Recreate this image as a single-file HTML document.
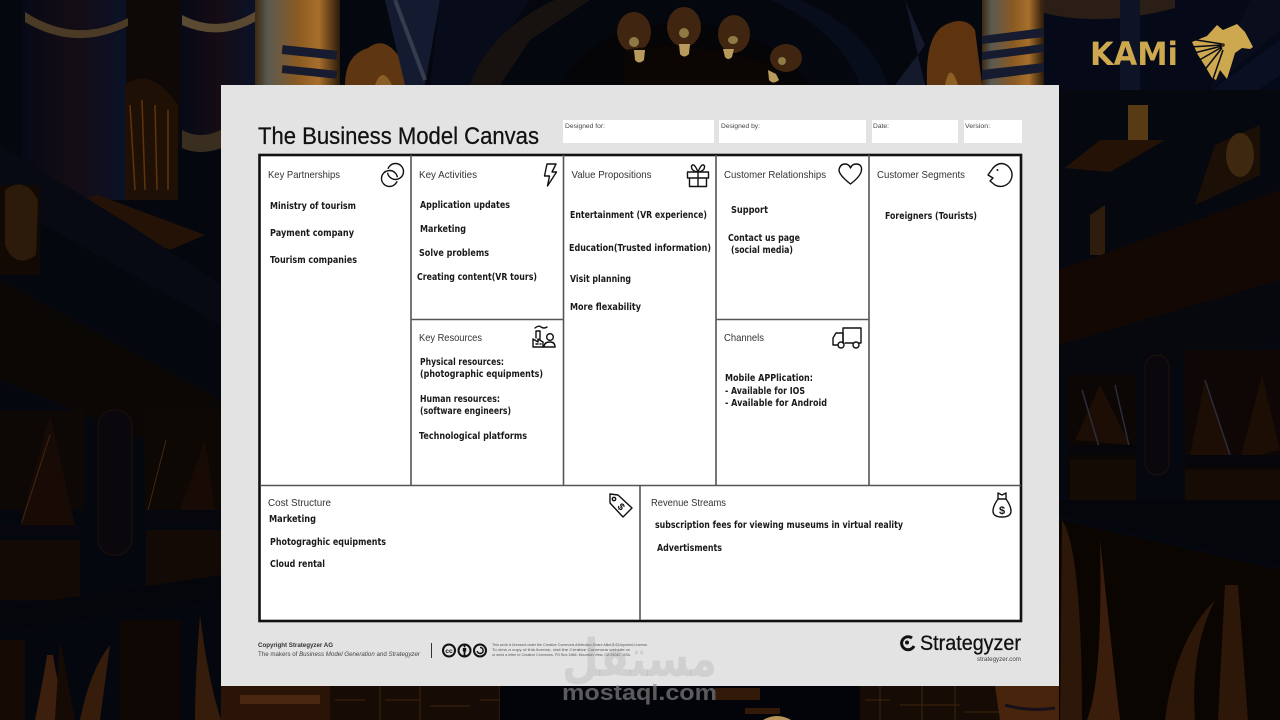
<!DOCTYPE html>
<html lang="en"><head><meta charset="utf-8"><title>The Business Model Canvas</title>
<style>html,body{margin:0;padding:0;background:#04060d;width:1280px;height:720px;overflow:hidden}svg{display:block}
.l{font:10.5px "Liberation Sans",sans-serif;fill:#333}
.b{font:bold 9.5px "DejaVu Sans",sans-serif;fill:#1a1a1a}
.i{fill:none;stroke:#111;stroke-width:1.4;stroke-linejoin:round;stroke-linecap:round}
.g{stroke:#555;stroke-width:1.6;fill:none}
</style></head><body>
<svg width="1280" height="720" viewBox="0 0 1280 720" xmlns="http://www.w3.org/2000/svg">
<defs>
<linearGradient id="gc" x1="0" x2="1" y1="0" y2="0"><stop offset="0" stop-color="#3d2a12"/><stop offset=".15" stop-color="#5a5a52"/><stop offset=".5" stop-color="#8a5a22"/><stop offset=".75" stop-color="#a86f2c"/><stop offset="1" stop-color="#2a1a0a"/></linearGradient>
<linearGradient id="nv" x1="0" x2="1" y1="0" y2="0"><stop offset="0" stop-color="#060a16"/><stop offset=".5" stop-color="#150c14"/><stop offset="1" stop-color="#0a1228"/></linearGradient>
</defs>
<rect width="1280" height="720" fill="#05070f"/>

<!-- left background -->
<g>
<rect x="22" y="0" width="104" height="200" fill="url(#nv)"/>
<rect x="180" y="0" width="75" height="150" fill="url(#nv)"/>
<path d="M126 0H180V150L126 120Z" fill="#0e0807"/>
<path d="M25 12Q75 45 128 18V26Q75 52 25 22Z" fill="#4a3a26"/>
<path d="M182 15Q220 35 258 10V20Q220 42 182 25Z" fill="#5a4a32"/>
<path d="M182 130Q200 140 221 130V148Q200 156 182 148Z" fill="#3a2e20"/>
<path d="M125 85Q150 65 178 105V200H125Z" fill="#1f1006"/>
<path d="M130 105L135 190M142 100L145 190M155 105L157 190M168 110L168 190" stroke="#5e340e" stroke-width="1.5"/>
<path d="M98 195L205 235L170 250L60 205Z" fill="#241206"/>
<path d="M0 145L130 225L221 285V325L0 200Z" fill="#080a13"/>
<rect x="0" y="185" width="40" height="90" fill="#120904"/>
<path d="M5 190Q25 175 38 200L36 255Q15 270 5 245Z" fill="#2c1a0b"/>
<path d="M0 280L221 400V470L0 380Z" fill="#0b0705"/>
<rect x="0" y="410" width="85" height="100" fill="#0d0705"/>
<rect x="145" y="410" width="76" height="100" fill="#0e0805"/>
<path d="M20 525L50 415L75 525ZM180 510L205 440L215 510Z" fill="#180b05"/>
<path d="M22 522L50 435M148 510L166 440" stroke="#3e2816" stroke-width="1"/>
<rect x="0" y="525" width="80" height="10" fill="#07070d"/>
<rect x="146" y="512" width="75" height="10" fill="#07070d"/>
<rect x="0" y="540" width="80" height="60" fill="#130a05"/>
<rect x="146" y="530" width="75" height="60" fill="#130a05"/>
<rect x="98" y="410" width="34" height="145" rx="16" fill="#0a080c" stroke="#20110a"/>
<path d="M0 608L221 575V600L0 632Z" fill="#05060c"/>
<path d="M120 620H180V720H120Z" fill="#0f0703"/>
<path d="M35 720Q45 670 47 655H53Q58 690 70 720Z" fill="#3c1f0c"/>
<path d="M80 720Q90 670 110 645L100 720ZM195 720Q195 680 200 615Q208 680 221 720Z" fill="#361c0a"/>
<path d="M0 640H25V720H0ZM60 640L75 720H55Z" fill="#150a04"/>
</g>

<!-- top center -->
<rect x="255" y="0" width="85" height="85" fill="url(#gc)"/>
<rect x="282" y="48" width="55" height="9" fill="#161b30" transform="rotate(6 310 53)"/>
<rect x="282" y="68" width="55" height="8" fill="#161b30" transform="rotate(6 310 72)"/>
<path d="M345 85Q345 55 368 48Q385 35 400 58L405 85Z" fill="#5e3612"/>
<path d="M375 85Q382 65 392 85Z" fill="#8a5e24"/>
<path d="M385 0H440L425 85H405Z" fill="#141b30"/>
<path d="M395 0L425 80" stroke="#343c4e" stroke-width="4"/>
<path d="M440 0L430 85H470L530 0Z" fill="#080c1a"/>
<path d="M470 85Q490 30 555 0H590L530 40L500 85Z" fill="#17120f"/>
<!-- dome -->
<path d="M560 85Q590 35 640 28Q720 10 790 60L810 85Z" fill="#050407"/>
<g fill="#402511"><ellipse cx="634" cy="32" rx="17" ry="20"/><ellipse cx="684" cy="27" rx="17" ry="20"/><ellipse cx="734" cy="34" rx="16" ry="19"/><ellipse cx="786" cy="58" rx="16" ry="14"/></g>
<g fill="#8e7a44"><ellipse cx="634" cy="42" rx="5" ry="5"/><ellipse cx="684" cy="33" rx="5" ry="5"/><ellipse cx="733" cy="40" rx="5" ry="4"/><ellipse cx="782" cy="61" rx="4" ry="4"/></g>
<path d="M625 50Q690 38 770 65L785 85H625Z" fill="#0c0603" opacity=".8"/>
<g fill="#b89a5c"><path d="M634 50h11l-1 10q-5 5-9 0z"/><path d="M679 44h11l-1 10q-5 5-9 0z"/><path d="M723 49h11l-2 8q-4 4-7 0z"/><path d="M768 70l8 4l3 6q-6 5-10 0z"/></g>
<path d="M800 0Q870 30 888 85H860Q840 30 770 0Z" fill="#080d1c"/>
<!-- top right -->
<path d="M905 0L925 85H895L925 45L905 0Z" fill="#141a2c"/>
<path d="M927 85Q925 35 945 25Q965 15 975 30L982 85Z" fill="#5e3410"/>
<path d="M945 85Q950 60 958 85Z" fill="#8e6024"/>
<rect x="982" y="0" width="62" height="85" fill="url(#gc)"/>
<path d="M982 36L1044 28V37L982 44ZM982 52L1044 44V52L982 60ZM982 70L1044 63V72L982 80Z" fill="#161b30"/>
<rect x="1044" y="0" width="236" height="130" fill="#060a18"/>
<path d="M1040 12Q1100 28 1175 8V0H1040Z" fill="#3a2616" opacity=".7"/>
<path d="M1145 140L1280 40V75L1170 150Z" fill="#0b0f22"/>
<path d="M1250 0L1280 0V30L1210 90Z" fill="#090d1c"/>
<path d="M1120 0H1140V100H1120Z" fill="#0f1326"/>

<!-- right background -->
<rect x="1059" y="90" width="221" height="430" fill="#06080f"/>
<path d="M1128 105h20v35h-20z" fill="#583a14"/>
<path d="M1065 168L1100 140H1165L1110 172Z" fill="#241206"/>
<path d="M1215 145L1260 125V175L1195 205Z" fill="#1c1006"/>
<ellipse cx="1240" cy="155" rx="14" ry="22" fill="#3e2810"/>
<path d="M1090 215L1105 205V255H1090Z" fill="#2e1c0c"/>
<path d="M1059 270L1280 190V280L1059 345Z" fill="#130804"/>
<path d="M1059 345L1280 280V340L1059 395Z" fill="#07080e"/>
<rect x="1068" y="375" width="68" height="125" fill="#0c0705"/>
<rect x="1185" y="350" width="95" height="150" fill="#0e0705"/>
<path d="M1075 440L1100 385L1130 445ZM1190 455L1205 380L1230 455ZM1240 460L1262 375L1280 450Z" fill="#1c0d05"/>
<path d="M1082 390L1100 450M1115 385L1130 450M1205 380L1230 455" stroke="#2c2d3a" stroke-width="1.5"/>
<rect x="1068" y="445" width="68" height="10" fill="#06060a"/>
<rect x="1185" y="455" width="95" height="12" fill="#06060a"/>
<rect x="1070" y="460" width="66" height="42" fill="#150b05"/>
<rect x="1185" y="470" width="95" height="50" fill="#170b05"/>
<rect x="1145" y="355" width="24" height="120" rx="12" fill="#0a080c" stroke="#20110a"/>
<path d="M1059 500H1280V565L1059 515Z" fill="#05060c"/>
<path d="M1059 520L1280 570V720H1059Z" fill="#0b0502"/>
<path d="M1087 720Q1103 680 1100 540Q1115 680 1120 720Z" fill="#3a1e0b"/>
<path d="M1062 520Q1082 550 1082 720H1060ZM1165 720Q1175 640 1215 600Q1190 650 1195 720Z" fill="#2c1708"/>
<path d="M1218 720L1225 585H1238L1248 720Z" fill="#2c1708"/>

<!-- bottom strip -->
<path d="M221 686H390V720H221Z" fill="#2a1407"/>
<rect x="240" y="695" width="80" height="9" fill="#4a2810"/>
<path d="M330 686H500V720H330Z" fill="#170c05"/>
<g stroke="#3c220c" stroke-width="1"><path d="M335 700H365M385 700H420M430 706H470M480 700H500M500 686V720M420 686V720M380 686V720"/></g>
<rect x="500" y="686" width="360" height="34" fill="#03040a"/>
<path d="M715 688h45v12h-45zM745 708h35v6h-35z" fill="#331a08"/>
<path d="M763 720q14-8 28 0z" fill="#b8965a"/>
<path d="M860 686H1000V720H860Z" fill="#170c05"/>
<g stroke="#3e240c" stroke-width="1"><path d="M865 700H890M900 705H960M965 712H1000M880 686V720M922 686V720M955 686V720"/></g>
<path d="M995 686H1059V720H1000Z" fill="#48240c"/>
<path d="M1005 705Q1030 712 1055 708" stroke="#16101a" stroke-width="3" fill="none"/>

<!-- card -->
<rect x="221" y="85" width="838" height="601" fill="#e3e3e3"/>
<text x="258" y="144" font-family="Liberation Sans" font-size="24" fill="#111" stroke="#111" stroke-width=".25" textLength="281" lengthAdjust="spacingAndGlyphs">The Business Model Canvas</text>
<g fill="#fff"><rect x="563" y="120" width="151" height="23"/><rect x="719" y="120" width="147" height="23"/><rect x="872" y="120" width="86" height="23"/><rect x="964" y="120" width="58" height="23"/></g>
<g font-family="Liberation Sans" font-size="6.5" fill="#444"><text x="565" y="128" textLength="40" lengthAdjust="spacingAndGlyphs">Designed for:</text><text x="721" y="128" textLength="39" lengthAdjust="spacingAndGlyphs">Designed by:</text><text x="873" y="128" textLength="16" lengthAdjust="spacingAndGlyphs">Date:</text><text x="965" y="128" textLength="25" lengthAdjust="spacingAndGlyphs">Version:</text></g>

<!-- grid -->
<rect x="259.5" y="155" width="761.5" height="466" fill="#fff" stroke="#111" stroke-width="2.6"/>
<path class="g" d="M411 155V485M563.5 155V485M716 155V485M869 155V485M260 485.5H1021M640 485.5V620M411 319.5H563.5M716 319.5H869"/>

<!-- labels -->
<text class="l" x="268" y="178" textLength="72" lengthAdjust="spacingAndGlyphs">Key Partnerships</text>
<text class="l" x="419" y="178" textLength="58" lengthAdjust="spacingAndGlyphs">Key Activities</text>
<text class="l" x="571.500" y="178" textLength="80" lengthAdjust="spacingAndGlyphs">Value Propositions</text>
<text class="l" x="724" y="178" textLength="102" lengthAdjust="spacingAndGlyphs">Customer Relationships</text>
<text class="l" x="877" y="178" textLength="88" lengthAdjust="spacingAndGlyphs">Customer Segments</text>
<text class="l" x="419" y="341" textLength="63" lengthAdjust="spacingAndGlyphs">Key Resources</text>
<text class="l" x="724" y="341" textLength="40" lengthAdjust="spacingAndGlyphs">Channels</text>
<text class="l" x="268" y="506" textLength="63" lengthAdjust="spacingAndGlyphs">Cost Structure</text>
<text class="l" x="651" y="506" textLength="75" lengthAdjust="spacingAndGlyphs">Revenue Streams</text>

<!-- bold content -->
<g transform="translate(0,-.8)">
<text class="b" x="270" y="210" textLength="86" lengthAdjust="spacingAndGlyphs">Ministry of tourism</text>
<text class="b" x="270" y="237" textLength="84" lengthAdjust="spacingAndGlyphs">Payment company</text>
<text class="b" x="270" y="264" textLength="87" lengthAdjust="spacingAndGlyphs">Tourism companies</text>
<text class="b" x="420" y="209" textLength="90" lengthAdjust="spacingAndGlyphs">Application updates</text>
<text class="b" x="420" y="233" textLength="46" lengthAdjust="spacingAndGlyphs">Marketing</text>
<text class="b" x="419" y="257" textLength="70" lengthAdjust="spacingAndGlyphs">Solve problems</text>
<text class="b" x="417" y="281" textLength="120" lengthAdjust="spacingAndGlyphs">Creating content(VR tours)</text>
<text class="b" x="570" y="219" textLength="137" lengthAdjust="spacingAndGlyphs">Entertainment (VR experience)</text>
<text class="b" x="569" y="252" textLength="142" lengthAdjust="spacingAndGlyphs">Education(Trusted information)</text>
<text class="b" x="570" y="283" textLength="61" lengthAdjust="spacingAndGlyphs">Visit planning</text>
<text class="b" x="570" y="311" textLength="71" lengthAdjust="spacingAndGlyphs">More flexability</text>
<text class="b" x="731" y="214" textLength="37" lengthAdjust="spacingAndGlyphs">Support</text>
<text class="b" x="728" y="242" textLength="72" lengthAdjust="spacingAndGlyphs">Contact us page</text>
<text class="b" x="731" y="254" textLength="62" lengthAdjust="spacingAndGlyphs">(social media)</text>
<text class="b" x="885" y="220" textLength="92" lengthAdjust="spacingAndGlyphs">Foreigners (Tourists)</text>
<text class="b" x="420" y="366" textLength="84" lengthAdjust="spacingAndGlyphs">Physical resources:</text>
<text class="b" x="420" y="378" textLength="123" lengthAdjust="spacingAndGlyphs">(photographic equipments)</text>
<text class="b" x="420" y="403" textLength="80" lengthAdjust="spacingAndGlyphs">Human resources:</text>
<text class="b" x="420" y="415" textLength="91" lengthAdjust="spacingAndGlyphs">(software engineers)</text>
<text class="b" x="419" y="440" textLength="108" lengthAdjust="spacingAndGlyphs">Technological platforms</text>
<text class="b" x="725" y="382" textLength="88" lengthAdjust="spacingAndGlyphs">Mobile APPlication:</text>
<text class="b" x="725" y="395" textLength="80" lengthAdjust="spacingAndGlyphs">- Available for IOS</text>
<text class="b" x="725" y="407" textLength="102" lengthAdjust="spacingAndGlyphs">- Available for Android</text>
<text class="b" x="269" y="523" textLength="47" lengthAdjust="spacingAndGlyphs">Marketing</text>
<text class="b" x="270" y="546" textLength="116" lengthAdjust="spacingAndGlyphs">Photograghic equipments</text>
<text class="b" x="270" y="568" textLength="55" lengthAdjust="spacingAndGlyphs">Cloud rental</text>
<text class="b" x="655" y="529" textLength="248" lengthAdjust="spacingAndGlyphs">subscription fees for viewing museums in virtual reality</text>
<text class="b" x="657" y="552" textLength="65" lengthAdjust="spacingAndGlyphs">Advertisments</text>
</g>

<!-- icons -->
<circle class="i" cx="389.500" cy="178.500" r="8"/>
<circle cx="397.500" cy="179.300" r="2" fill="#fff"/>
<circle class="i" cx="395.500" cy="171.500" r="8"/>
<circle cx="387.500" cy="170.700" r="2" fill="#fff"/>
<g class="i">
<path d="M384.500 172.200A8 8 0 0 1 390.500 170.600"/>
<path d="M547 164H556L552 172H556.500L547.500 186L549.500 176H544.500Z"/>
<path d="M687.500 172H708.500V178H687.500ZM689.500 178V186.500H706.500V178M698 172V186.500M698 172Q691 171 691.500 166Q694 162 698 172Q702 162 704.500 166Q705 171 698 172"/>
<path d="M850.500 184Q839 175 839 170Q840 164 845 164Q849 164 850.500 168Q852 164 856 164Q862 164 861.500 170Q861 176 850.500 184Z"/>
<path d="M993 168Q997 163.500 1002 163.500A11.500 11.500 0 1 1 995 185L990 181L993 178L988 175Z"/>
<path d="M536 338V331H540V339M533 347V339L538 342V339L543 342V347ZM533 347H555M536 344h2M540 344h1"/><path d="M535 328Q539 325 541 327Q544 329 547 327"/><circle cx="550" cy="337" r="3.300"/><path d="M544 347Q544 342 550 342Q555 342 555 347"/>
<path d="M843 343V328H861V343H859M853 343H845"/><path d="M838 345H833V338L836 333H843V343"/><circle cx="841" cy="345" r="3"/><circle cx="856" cy="345" r="3"/>
<path d="M610 494L618 495L632 508L623 517L610 503Z"/><circle cx="614" cy="499" r="1.700"/>
<path d="M998 493L1002 495L1006 493V499H998ZM998 499Q993 506 993 511Q993 517 1002 517Q1011 517 1011 511Q1011 506 1006 499"/>
</g>
<circle cx="997.500" cy="170" r="1" fill="#111"/>
<text x="621" y="510" font-family="Liberation Sans" font-weight="bold" font-size="10" fill="#111" text-anchor="middle" transform="rotate(45 621 507)">$</text>
<text x="1002" y="514" font-family="Liberation Sans" font-weight="bold" font-size="11" fill="#111" text-anchor="middle">$</text>

<!-- footer -->
<text x="258" y="647" font-family="Liberation Sans" font-weight="bold" font-size="6" fill="#333" textLength="75" lengthAdjust="spacingAndGlyphs">Copyright Strategyzer AG</text>
<text x="258" y="656" font-family="Liberation Sans" font-size="6" fill="#444" textLength="162" lengthAdjust="spacingAndGlyphs">The makers of <tspan font-style="italic">Business Model Generation</tspan> and <tspan font-style="italic">Strategyzer</tspan></text>
<path d="M431.500 643V658" stroke="#333" stroke-width="1"/>
<g fill="none" stroke="#111" stroke-width="2"><circle cx="449" cy="650.500" r="6"/><circle cx="464.500" cy="650.500" r="6"/><circle cx="480" cy="650.500" r="6"/><path d="M480 647.500a3 3 0 1 1-2.800 3.500" stroke-width="1.500"/></g>
<text x="449" y="653" text-anchor="middle" font-family="Liberation Sans" font-weight="bold" font-size="6.500" fill="#111">cc</text>
<path d="M464.500 645.500a1 1 0 1 1-.01 0zM462.800 648h3.400v3.500h-.8v4h-1.800v-4h-.8z" fill="#111"/>
<g font-family="Liberation Sans" font-size="4" fill="#555"><text x="492" y="646" textLength="156" lengthAdjust="spacingAndGlyphs">This work is licensed under the Creative Commons Attribution-Share Alike 3.0 Unported License.</text><text x="492" y="651" textLength="138" lengthAdjust="spacingAndGlyphs">To view a copy of this license, visit the Creative Commons website or</text><text x="492" y="656" textLength="139" lengthAdjust="spacingAndGlyphs">or send a letter to Creative Commons, PO Box 1866, Mountain View, CA 94042, USA.</text></g>
<path d="M912 638A6.500 6.500 0 1 0 914 646" fill="none" stroke="#111" stroke-width="3"/><circle cx="907" cy="642.500" r="2" fill="#111"/>
<text x="920" y="650" font-family="Liberation Sans" font-size="21" fill="#111" stroke="#111" stroke-width=".3" textLength="101" lengthAdjust="spacingAndGlyphs">Strategyzer</text>
<text x="977" y="661" font-family="Liberation Sans" font-size="6" fill="#444" textLength="44" lengthAdjust="spacingAndGlyphs">strategyzer.com</text>

<!-- watermark -->
<text x="562" y="676" font-family="DejaVu Sans" font-weight="bold" font-size="52" fill="#888" fill-opacity=".2" textLength="155" lengthAdjust="spacingAndGlyphs">مستقل</text>
<text x="562" y="700" font-family="Liberation Sans" font-weight="bold" font-size="22" fill="#8a8a8a" fill-opacity=".65" textLength="155" lengthAdjust="spacingAndGlyphs">mostaql.com</text>

<!-- KAMI logo -->
<text x="1090" y="65" font-family="DejaVu Sans" font-weight="bold" font-size="32" fill="#cda84f" textLength="88" lengthAdjust="spacingAndGlyphs">KAMi</text>
<path d="M1217 25L1223 30L1237 24L1245 32L1253 47L1250 49L1242 48L1235 53L1232 63L1227 79L1220 70L1216 80L1212 78L1205 66L1198 55L1192 42L1207 36Z" fill="#cda84f"/>
<path d="M1222 44L1190 39M1222 45L1190 47M1222 46L1190 54M1222 47L1196 62M1222 48L1203 72M1223 50L1212 82" stroke="#090b16" stroke-width="1.500" fill="none"/>
<circle cx="1223" cy="45" r="1.800" fill="#3a2a10"/>
</svg>
</body></html>
